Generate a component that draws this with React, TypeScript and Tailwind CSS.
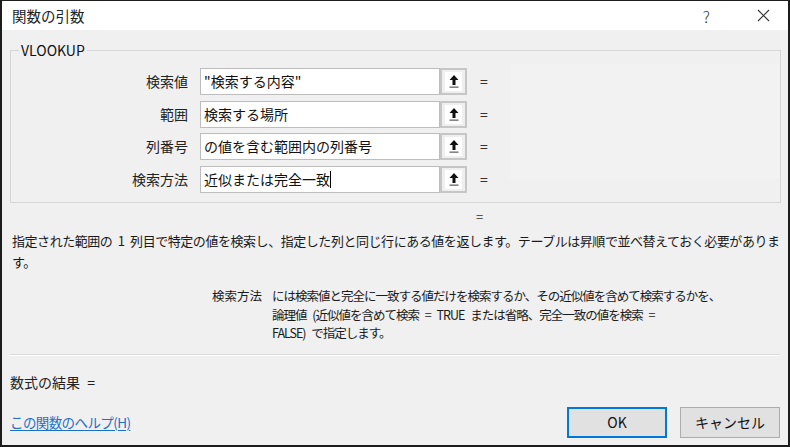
import React from "react";

const jp = { fontFamily: '"Noto Sans CJK JP", "Noto Sans", sans-serif' };

const args = [
  { label: "検索値", value: '"検索する内容"' },
  { label: "範囲", value: "検索する場所" },
  { label: "列番号", value: "の値を含む範囲内の列番号" },
  { label: "検索方法", value: "近似または完全一致", caret: true },
];

function RefButton() {
  return (
    <div className="w-[27px] h-[27px] border-2 border-[#c6c6c6] bg-[#efefef] flex items-center justify-center">
      <div className="w-[17px] h-[19px] bg-white flex items-center justify-center">
        <svg width="12" height="15" viewBox="0 0 12 15">
          <path d="M6 1 L1.5 6 H4.5 V11 H7.5 V6 H10.5 Z" fill="#111" />
          <rect x="1.5" y="12.5" width="9" height="1.3" fill="#666" />
        </svg>
      </div>
    </div>
  );
}

export default function App() {
  return (
    <div
      className="w-[790px] h-[447px] bg-[#f0f0f0] border-t border-x-2 border-b-2 border-[#1c1c1c] flex flex-col text-[#1a1a1a]"
      style={jp}
    >
      {/* title bar */}
      <div className="h-[29px] bg-white flex items-center pl-[10px] pr-[18px]">
        <span className="text-[14.5px] text-[#222]">関数の引数</span>
        <span className="ml-auto text-[16px] font-light text-[#333] mr-[47px]">?</span>
        <svg width="13" height="13" viewBox="0 0 13 13">
          <path d="M1 1 L12 12 M12 1 L1 12" stroke="#333" strokeWidth="1.1" />
        </svg>
      </div>

      <div className="flex-1 flex flex-col px-[8px]">
        {/* group box */}
        <fieldset className="mt-[11px] border border-[#d6d6d6] pb-[9px] pt-[9px]">
          <legend className="ml-[8px] px-[2px] text-[14px] leading-[18px] text-[#111]">VLOOKUP</legend>
          <div className="flex">
            <div className="flex flex-col gap-[5.7px]">
              {args.map((a) => (
                <div key={a.label} className="flex items-center h-[27px]">
                  <div className="w-[189px] pr-[12px] text-right text-[14px] text-[#222]">{a.label}</div>
                  <div className="w-[240px] h-[27px] bg-white border border-[#bdbdbd] flex items-center pl-[3px] text-[14px] text-[#111] whitespace-nowrap overflow-hidden">
                    {a.value}
                    {a.caret && <span className="inline-block w-px h-[17px] bg-black" />}
                  </div>
                  <RefButton />
                  <span className="ml-[13px] text-[14px] text-[#333]">=</span>
                </div>
              ))}
            </div>
            <div className="ml-[22px] -mt-[4px] w-[270px] h-[115px] bg-[#f2f2f2]" />
          </div>
        </fieldset>

        <div className="mt-[5px] h-[18px] leading-[18px] ml-[466px] text-[13px] text-[#333]">=</div>

        <div className="mt-[4px] ml-[2px] text-[13px] leading-[21px] tracking-[-0.45px] [word-spacing:3px] text-[#1a1a1a]">
          <div className="whitespace-nowrap">
            指定された範囲の 1 列目で特定の値を検索し、指定した列と同じ行にある値を返します。テーブルは昇順で並べ替えておく必要がありま
          </div>
          <div>す。</div>
        </div>

        <div className="mt-[15px] ml-[202px] flex text-[12.5px] leading-[18.5px] text-[#1a1a1a]">
          <div className="w-[60px] shrink-0">検索方法</div>
          <div className="tracking-[-1px] [word-spacing:4px] whitespace-nowrap">
            <div>には検索値と完全に一致する値だけを検索するか、その近似値を含めて検索するかを、</div>
            <div>論理値 (近似値を含めて検索 = TRUE または省略、完全一致の値を検索 =</div>
            <div>FALSE) で指定します。</div>
          </div>
        </div>

        <div className="mt-[11px] h-px bg-[#dadada] border-b border-white box-content" />

        <div className="mt-[16px] text-[14px] leading-[20px] text-[#222] [word-spacing:4px]">数式の結果 =</div>

        <div className="mt-[15px] flex items-center">
          <a href="#" className="text-[13.5px] leading-[20px] tracking-[-0.6px] text-[#1f6fc5] underline underline-offset-2">
            この関数のヘルプ(H)
          </a>
          <div className="ml-auto flex gap-[13px]">
            <button className="w-[100px] h-[31px] bg-[#e1e1e1] border-2 border-[#0078d7] text-[14px] text-[#111]">
              OK
            </button>
            <button className="w-[100px] h-[31px] bg-[#e1e1e1] border border-[#adadad] text-[14px] text-[#111]">
              キャンセル
            </button>
          </div>
        </div>
      </div>
    </div>
  );
}
